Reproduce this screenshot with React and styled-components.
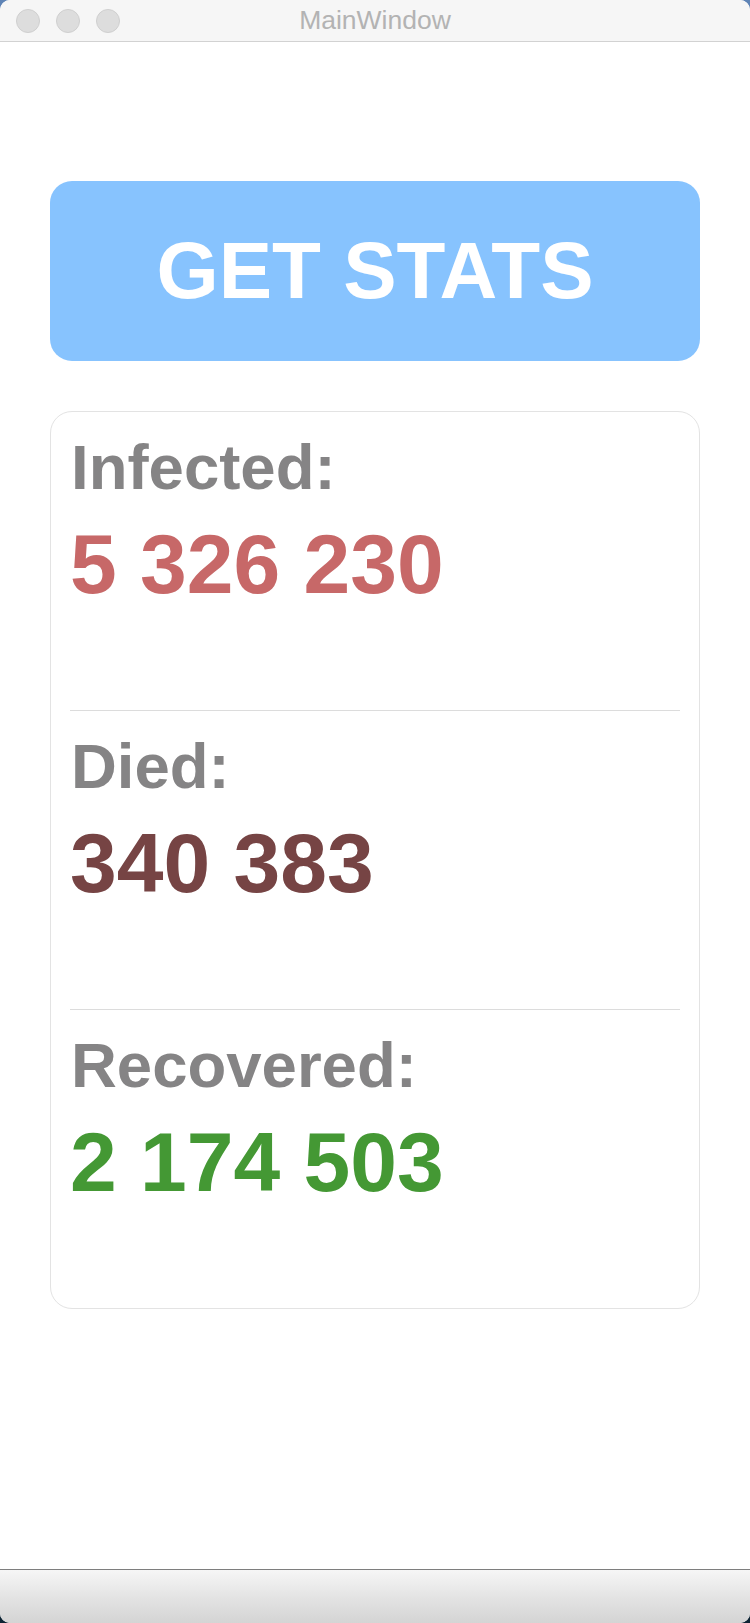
import React from 'react';
import styled, { createGlobalStyle } from 'styled-components';

const GlobalStyle = createGlobalStyle`
  html, body {
    margin: 0;
    padding: 0;
  }
  body {
    background: linear-gradient(180deg, #5f84b6 0%, #2c4a6e 50%, #0e2434 100%);
    font-family: "Liberation Sans", Arial, sans-serif;
  }
`;

const Window = styled.div`
  width: 750px;
  height: 1623px;
  display: flex;
  flex-direction: column;
  background: #ffffff;
  border-radius: 10px;
  overflow: hidden;
`;

const TitleBar = styled.div`
  position: relative;
  height: 41px;
  flex-shrink: 0;
  display: flex;
  align-items: center;
  justify-content: center;
  background: #f6f6f6;
  border-bottom: 1px solid #d2d2d2;
`;

const Lights = styled.div`
  position: absolute;
  left: 16px;
  top: 9px;
  display: flex;
  gap: 16px;
`;

const Light = styled.span`
  width: 22px;
  height: 22px;
  border-radius: 50%;
  background: #dddddd;
  border: 1px solid #cfcfcf;
`;

const Title = styled.div`
  font-family: "Liberation Sans", Arial, sans-serif;
  font-size: 26.5px;
  color: #b3b3b3;
`;

const Content = styled.div`
  flex: 1;
  display: flex;
  flex-direction: column;
  padding: 139px 50px 0;
  background: #ffffff;
`;

const StatsButton = styled.button`
  height: 180px;
  width: 100%;
  border: none;
  border-radius: 22px;
  background: #87c3fe;
  color: #ffffff;
  font-family: "Liberation Sans", Arial, sans-serif;
  font-weight: bold;
  font-size: 80px;
  cursor: pointer;
  padding: 0;
`;

const Card = styled.div`
  margin-top: 50px;
  border: 1px solid #e3e3e3;
  border-radius: 22px;
  display: flex;
  flex-direction: column;
`;

const Section = styled.div`
  height: ${p => (p.$first ? '298px' : '299px')};
  margin: 0 19px;
  padding-top: 19px;
  box-sizing: border-box;
  border-top: ${p => (p.$first ? 'none' : '1px solid #dcdcdc')};
`;

const Label = styled.div`
  font-size: 63.5px;
  line-height: 72px;
  font-weight: bold;
  color: #858485;
  padding-left: 1px;
`;

const Value = styled.div`
  margin-top: 13px;
  font-size: 84px;
  line-height: 96px;
  font-weight: bold;
  color: ${p => p.$color};
`;

const BottomBar = styled.div`
  height: 53px;
  flex-shrink: 0;
  border-top: 1px solid #7e7e7e;
  background: linear-gradient(180deg, #f6f6f6 0%, #e4e4e4 50%, #d4d4d4 100%);
`;

const stats = [
  { label: 'Infected:', value: '5 326 230', color: '#c76868' },
  { label: 'Died:', value: '340 383', color: '#764444' },
  { label: 'Recovered:', value: '2 174 503', color: '#449834' },
];

const App = () => (
  <>
    <GlobalStyle />
    <Window>
      <TitleBar>
        <Lights>
          <Light />
          <Light />
          <Light />
        </Lights>
        <Title>MainWindow</Title>
      </TitleBar>
      <Content>
        <StatsButton>GET STATS</StatsButton>
        <Card>
          {stats.map((s, i) => (
            <Section key={s.label} $first={i === 0}>
              <Label>{s.label}</Label>
              <Value $color={s.color}>{s.value}</Value>
            </Section>
          ))}
        </Card>
      </Content>
      <BottomBar />
    </Window>
  </>
);

export default App;
